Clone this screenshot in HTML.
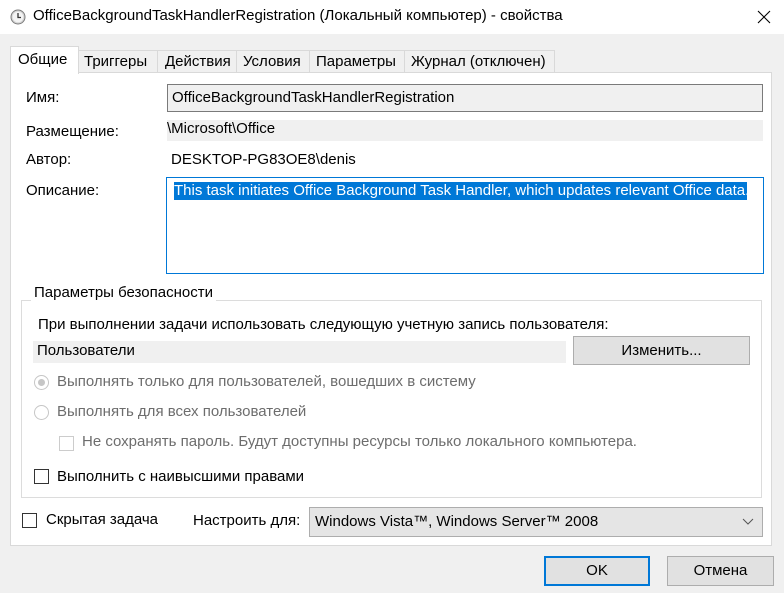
<!DOCTYPE html>
<html><head><meta charset="utf-8"><style>
*{margin:0;padding:0;box-sizing:border-box}
body{width:784px;height:593px;background:#f0f0f0;font-family:"Liberation Sans",sans-serif;font-size:15px;color:#000;position:relative;overflow:hidden}
.a{position:absolute;white-space:nowrap}
.g{color:#6d6d6d}
.btn{position:absolute;background:#e1e1e1;border:1px solid #adadad;text-align:center}
.cb{position:absolute;width:15px;height:15px;border:1px solid #333;background:#fff}
.rd{position:absolute;width:15px;height:15px;border:1px solid #c6c6c6;border-radius:50%;background:#fff}
</style></head><body>
<div class="a" style="left:0;top:0;width:784px;height:34px;background:#fff"></div>
<svg class="a" style="left:10px;top:9px" width="16" height="16"><circle cx="8" cy="8" r="7" fill="#d8d8d8" stroke="#7a7a7a"/><circle cx="8" cy="8" r="5.3" fill="#f4f4f4"/><path d="M8 4V8.5H11" stroke="#333" stroke-width="1.3" fill="none"/></svg>
<div class="a" style="left:33px;top:7px;font-size:15px">OfficeBackgroundTaskHandlerRegistration (Локальный компьютер) - свойства</div>
<svg class="a" style="left:757px;top:10px" width="14" height="14"><path d="M1 1L13 13M13 1L1 13" stroke="#000" stroke-width="1.1"/></svg>

<div class="a" style="left:10px;top:72px;width:762px;height:474px;background:#fff;border:1px solid #d9d9d9"></div>
<div class="a" style="left:78px;top:50px;width:80px;height:23px;border:1px solid #d9d9d9;background:#f0f0f0"></div>
<div class="a" style="left:157px;top:50px;width:80px;height:23px;border:1px solid #d9d9d9;background:#f0f0f0"></div>
<div class="a" style="left:236px;top:50px;width:74px;height:23px;border:1px solid #d9d9d9;background:#f0f0f0"></div>
<div class="a" style="left:309px;top:50px;width:96px;height:23px;border:1px solid #d9d9d9;background:#f0f0f0"></div>
<div class="a" style="left:404px;top:50px;width:151px;height:23px;border:1px solid #d9d9d9;background:#f0f0f0"></div>
<div class="a" style="left:10px;top:46px;width:69px;height:28px;border:1px solid #d9d9d9;border-bottom:none;background:#fff"></div>
<div class="a" style="left:18px;top:51px">Общие</div>
<div class="a" style="left:84px;top:53px">Триггеры</div>
<div class="a" style="left:165px;top:53px">Действия</div>
<div class="a" style="left:243px;top:53px">Условия</div>
<div class="a" style="left:316px;top:53px">Параметры</div>
<div class="a" style="left:411px;top:53px">Журнал (отключен)</div>

<div class="a" style="left:26px;top:89px">Имя:</div>
<div class="a" style="left:167px;top:84px;width:596px;height:28px;background:#f0f0f0;border:1px solid #7a7a7a;padding:4px 4px">OfficeBackgroundTaskHandlerRegistration</div>
<div class="a" style="left:26px;top:123px">Размещение:</div>
<div class="a" style="left:167px;top:120px;width:596px;height:21px;background:#f0f0f0;padding:0 0">\Microsoft\Office</div>
<div class="a" style="left:26px;top:151px">Автор:</div>
<div class="a" style="left:171px;top:151px">DESKTOP-PG83OE8\denis</div>
<div class="a" style="left:26px;top:182px">Описание:</div>
<div class="a" style="left:166px;top:177px;width:598px;height:97px;border:1px solid #0078d7;background:#fff"></div>
<div class="a" style="left:174px;top:182px;width:573px;height:18px;background:#0078d7;color:#fff;padding-top:0">This task initiates Office Background Task Handler, which updates relevant Office data.</div>

<div class="a" style="left:21px;top:300px;width:741px;height:198px;border:1px solid #dcdcdc"></div>
<div class="a" style="left:31px;top:284px;background:#fff;padding:0 3px">Параметры безопасности</div>
<div class="a" style="left:38px;top:316px">При выполнении задачи использовать следующую учетную запись пользователя:</div>
<div class="a" style="left:33px;top:341px;width:533px;height:22px;background:#f0f0f0;padding:1px 4px">Пользователи</div>
<div class="btn" style="left:573px;top:336px;width:177px;height:29px;padding-top:5px">Изменить...</div>
<div class="rd" style="left:34px;top:375px"></div><div class="a" style="left:38px;top:379px;width:7px;height:7px;border-radius:50%;background:#c6c6c6"></div>
<div class="a g" style="left:57px;top:373px">Выполнять только для пользователей, вошедших в систему</div>
<div class="rd" style="left:34px;top:405px"></div>
<div class="a g" style="left:57px;top:403px">Выполнять для всех пользователей</div>
<div class="cb" style="left:59px;top:436px;border-color:#cccccc"></div>
<div class="a g" style="left:82px;top:433px">Не сохранять пароль. Будут доступны ресурсы только локального компьютера.</div>
<div class="cb" style="left:34px;top:469px"></div>
<div class="a" style="left:57px;top:468px">Выполнить с наивысшими правами</div>

<div class="cb" style="left:22px;top:513px"></div>
<div class="a" style="left:46px;top:511px">Скрытая задача</div>
<div class="a" style="left:193px;top:512px">Настроить для:</div>
<div class="a" style="left:309px;top:507px;width:454px;height:30px;background:#e5e5e5;border:1px solid #adadad;padding:5px 5px">Windows Vista™, Windows Server™ 2008</div>
<svg class="a" style="left:742px;top:518px" width="12" height="8"><path d="M1 1L6 6L11 1" stroke="#555" fill="none"/></svg>

<div class="btn" style="left:544px;top:556px;width:106px;height:30px;border:2px solid #0078d7;padding-top:4px">OK</div>
<div class="btn" style="left:667px;top:556px;width:107px;height:30px;padding-top:5px">Отмена</div>
</body></html>
